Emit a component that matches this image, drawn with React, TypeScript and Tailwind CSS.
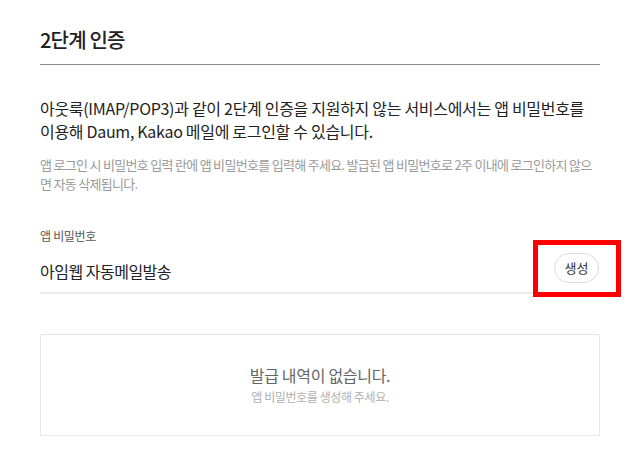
import React from 'react';

const font = { fontFamily: '"Noto Sans CJK KR", "Noto Sans", sans-serif' };

const App: React.FC = () => {
  return (
    <div className="relative min-h-[470px] w-[640px] bg-white px-10 text-[#222]" style={font}>
      {/* Title */}
      <div className="border-b border-[#8c8c8c] pt-[26px] pb-[10px]">
        <h2 className="text-[20px] leading-[28px] font-medium tracking-[-0.8px]">2단계 인증</h2>
      </div>

      {/* Description */}
      <p className="mt-8 text-[16px] leading-[23px] tracking-[-0.3px]">
        아웃룩(IMAP/POP3)과 같이 2단계 인증을 지원하지 않는 서비스에서는 앱 비밀번호를 이용해 Daum, Kakao 메일에 로그인할 수 있습니다.
      </p>
      <p className="mt-3 break-all text-[13px] leading-[19px] tracking-[-0.7px] text-[#9a9a9a]">
        앱 로그인 시 비밀번호 입력 란에 앱 비밀번호를 입력해 주세요. 발급된 앱 비밀번호로 2주 이내에 로그인하지 않으면 자동 삭제됩니다.
      </p>

      {/* App password field */}
      <div className="mt-[34px]">
        <label className="block text-[12px] leading-[18px] tracking-[-0.3px] text-[#555]">앱 비밀번호</label>
        <div className="mt-1 flex h-[45px] items-center justify-between border-b-2 border-[#ececec] pb-[2px]">
          <span className="pt-[3px] text-[16px] tracking-[-0.5px] text-[#222]">아임웹 자동메일발송</span>
          <button className="mr-px flex h-[30px] w-[45px] items-center justify-center self-start mt-[4px] rounded-full border border-[#dcdcdc] bg-white text-[13px] text-[#333]">
            생성
          </button>
        </div>
      </div>

      {/* Empty list */}
      <div className="mt-[40px] flex h-[102px] flex-col items-center justify-center border border-[#e6e6e6]">
        <p className="text-[16px] leading-[22px] tracking-[-0.3px] text-[#666]">발급 내역이 없습니다.</p>
        <p className="mt-[2px] text-[12px] leading-[18px] tracking-[-0.4px] text-[#b0b0b0]">앱 비밀번호를 생성해 주세요.</p>
      </div>

      {/* Highlight annotation */}
      <div className="pointer-events-none absolute left-[533px] top-[240px] h-[57px] w-[88px] border-[5px] border-[#ff0000]" />
    </div>
  );
};

export default App;
